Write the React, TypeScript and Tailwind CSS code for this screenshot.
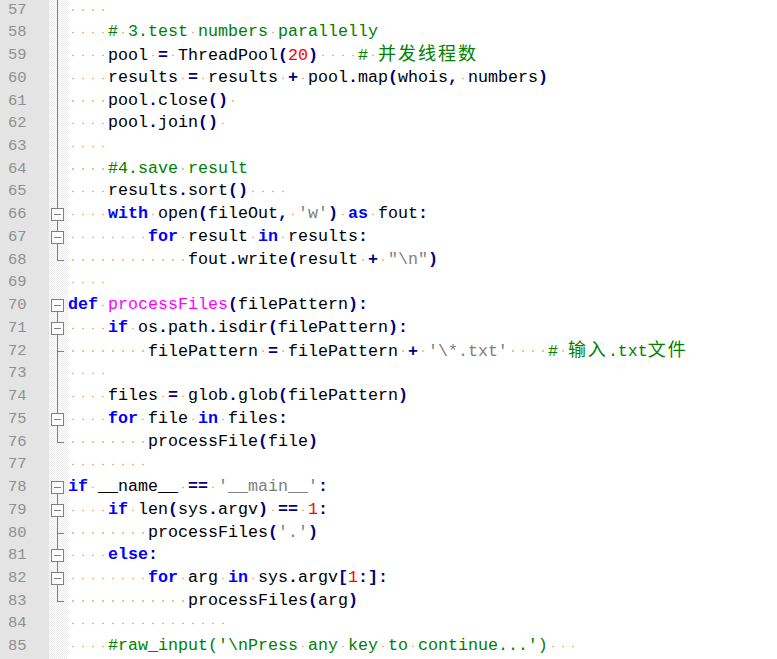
import type { ReactNode } from 'react';

const FIRST_LINE = 57;

const lines: string[] = [
  '    ',
  '    # 3.test numbers parallelly',
  '    pool = ThreadPool(20)    # 并发线程数',
  '    results = results + pool.map(whois, numbers)',
  '    pool.close() ',
  '    pool.join() ',
  '    ',
  '    #4.save result',
  '    results.sort()    ',
  "    with open(fileOut, 'w') as fout:",
  '        for result in results:',
  '            fout.write(result + "\\n")',
  '    ',
  'def processFiles(filePattern):',
  '    if os.path.isdir(filePattern):',
  "        filePattern = filePattern + '\\*.txt'    # 输入.txt文件",
  '    ',
  '    files = glob.glob(filePattern)',
  '    for file in files:',
  '        processFile(file)',
  '        ',
  "if __name__ == '__main__':",
  '    if len(sys.argv) == 1:',
  "        processFiles('.')",
  '    else:',
  '        for arg in sys.argv[1:]:',
  '            processFiles(arg)',
  '                ',
  "    #raw_input('\\nPress any key to continue...')   ",
];

// fold margin marker for each line
type Fold = 'v' | 'box' | 'boxTop' | 'end' | 'tee' | 'none';
const folds: Fold[] = [
  'v', 'v', 'v', 'v', 'v', 'v', 'v', 'v', 'v',
  'box', 'box', 'end', 'none',
  'boxTop', 'box', 'tee', 'v', 'v', 'box', 'end', 'none',
  'boxTop', 'box', 'tee', 'box', 'box', 'end', 'none', 'none',
];

const KEYWORDS = new Set(['with', 'for', 'in', 'if', 'def', 'else', 'as', 'import', 'return', 'not', 'and', 'or']);

const Space = () => (
  <span className="inline-block h-[22.74px] w-[10px] align-top bg-[radial-gradient(circle_at_center,#f9b272_0,#f9b272_0.6px,transparent_1.2px)]">
    {' '}
  </span>
);

const isCjk = (c: string) => /[\u3000-\u9fff\uff00-\uffef]/.test(c);

// spaces become whitespace dots, CJK glyphs take two cells
function plain(text: string, color: string, key: string): ReactNode[] {
  const out: ReactNode[] = [];
  let buf = '';
  let cjk = '';
  const pushBuf = () => {
    if (buf) out.push(<span key={`${key}-${out.length}`} className={color}>{buf}</span>);
    buf = '';
  };
  const pushCjk = () => {
    if (cjk)
      out.push(
        <span key={`${key}-${out.length}`} className={`${color} text-[18px] tracking-[2px]`}>
          {cjk}
        </span>,
      );
    cjk = '';
  };
  for (const c of text) {
    if (c === ' ') {
      pushBuf();
      pushCjk();
      out.push(<Space key={`${key}-${out.length}`} />);
    } else if (isCjk(c)) {
      pushBuf();
      cjk += c;
    } else {
      pushCjk();
      buf += c;
    }
  }
  pushBuf();
  pushCjk();
  return out;
}

function highlight(line: string): ReactNode[] {
  const out: ReactNode[] = [];
  let i = 0;
  let afterDef = false;
  while (i < line.length) {
    const c = line[i];
    const k = `t${i}`;
    if (c === ' ') {
      out.push(<Space key={k} />);
      i++;
    } else if (c === '#') {
      out.push(...plain(line.slice(i), 'text-[#008000]', k));
      break;
    } else if (c === "'" || c === '"') {
      let j = i + 1;
      while (j < line.length && line[j] !== c) {
        if (line[j] === '\\') j++;
        j++;
      }
      out.push(...plain(line.slice(i, j + 1), 'text-[#808080]', k));
      i = j + 1;
    } else if (/[0-9]/.test(c)) {
      let j = i;
      while (j < line.length && /[0-9]/.test(line[j])) j++;
      out.push(<span key={k} className="text-[#ff0000]">{line.slice(i, j)}</span>);
      i = j;
    } else if (/[A-Za-z_]/.test(c)) {
      let j = i;
      while (j < line.length && /[A-Za-z0-9_]/.test(line[j])) j++;
      const word = line.slice(i, j);
      if (KEYWORDS.has(word)) {
        out.push(<span key={k} className="font-bold text-[#0000ff]">{word}</span>);
        afterDef = word === 'def';
      } else if (afterDef) {
        out.push(<span key={k} className="text-[#ff00ff]">{word}</span>);
        afterDef = false;
      } else {
        out.push(<span key={k} className="text-black">{word}</span>);
      }
      i = j;
    } else {
      out.push(<span key={k} className="font-bold text-[#000080]">{c}</span>);
      i++;
    }
  }
  return out;
}

function FoldMark({ kind }: { kind: Fold }) {
  const mid = 11;
  const h = 22.74;
  return (
    <svg width="19" height={h} viewBox={`0 0 19 ${h}`} className="block" shapeRendering="crispEdges">
      {(kind === 'v' || kind === 'tee' || kind === 'box') && (
        <rect x="8" y="0" width="1" height={h} fill="#808080" />
      )}
      {kind === 'end' && <rect x="8" y="0" width="1" height={mid + 1} fill="#808080" />}
      {(kind === 'end' || kind === 'tee') && <rect x="8" y={mid} width="7" height="1" fill="#808080" />}
      {kind === 'boxTop' && <rect x="8" y={mid} width="1" height={h - mid} fill="#808080" />}
      {(kind === 'box' || kind === 'boxTop') && (
        <>
          <rect x="2.5" y={mid - 5.5} width="12" height="12" fill="#ffffff" stroke="#808080" strokeWidth="1" />
          <rect x="5" y={mid} width="7" height="1" fill="#808080" />
        </>
      )}
    </svg>
  );
}

export default function App() {
  return (
    <div className="flex h-[659px] w-[777px] overflow-hidden bg-white font-['Liberation_Mono','Noto_Sans_CJK_SC',monospace]">
      {/* line numbers */}
      <div className="w-[49px] shrink-0 bg-[#e4e4e4]">
        <div className="mt-[-1.4px] flex flex-col">
          {lines.map((_, n) => (
            <div key={n} className="h-[22.74px] pl-[8px] text-[15.5px] leading-[22.74px] text-[#909090]">
              {FIRST_LINE + n}
            </div>
          ))}
        </div>
      </div>

      {/* fold margin */}
      <div className="w-[19px] shrink-0 bg-[repeating-conic-gradient(#ebebeb_0_25%,#ffffff_0_50%)] bg-[length:2px_2px]">
        <div className="mt-[-1.4px] flex flex-col">
          {folds.map((f, n) => (
            <FoldMark key={n} kind={f} />
          ))}
        </div>
      </div>

      {/* code */}
      <div className="flex-1">
        <div className="mt-[-1.4px] flex flex-col">
          {lines.map((line, n) => (
            <div key={n} className="h-[22.74px] whitespace-pre text-[16.67px] leading-[22.74px]">
              {highlight(line)}
            </div>
          ))}
        </div>
      </div>
    </div>
  );
}
